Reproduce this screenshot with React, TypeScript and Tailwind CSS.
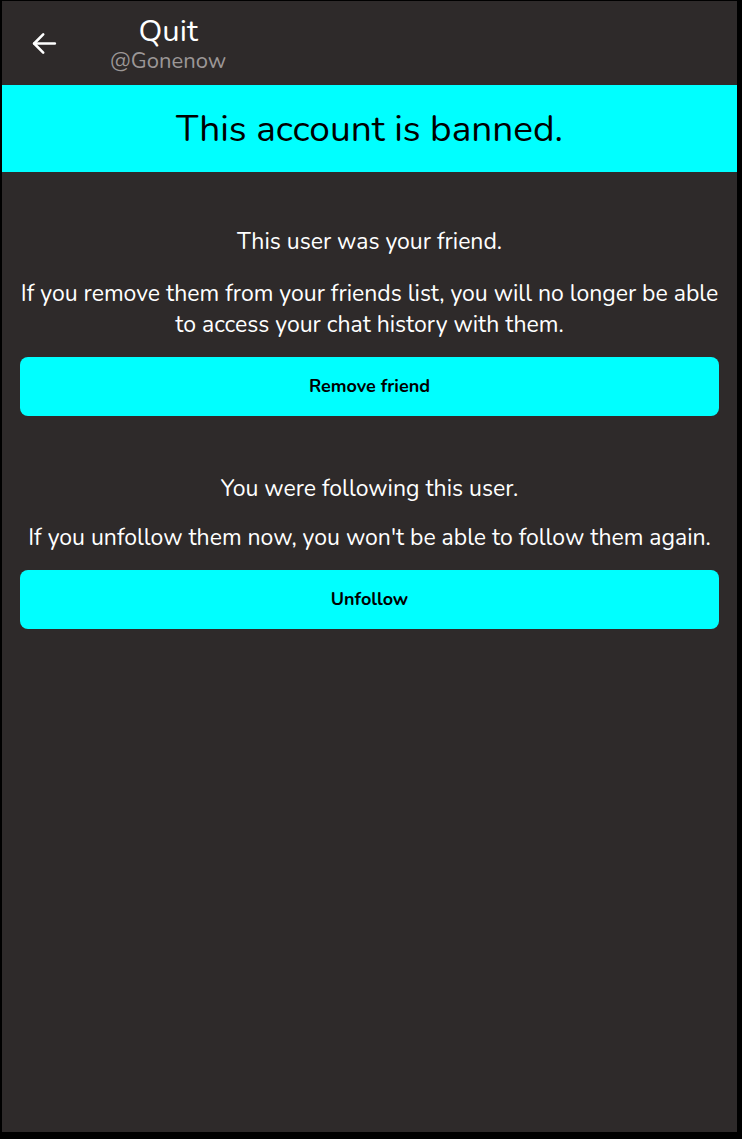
import React from "react";

export default function App() {
  const font = { fontFamily: "'Nunito', 'Open Sans', 'Noto Sans', sans-serif" };
  return (
    <div className="w-[742px] h-[1139px] bg-black" style={font}>
      <div className="ml-[2px] pt-[1px] w-[735px]">
        <div className="w-[735px] h-[1131px] bg-[#2e2a2a] flex flex-col">
          <header className="h-[84px] flex items-start">
            <div className="w-[84px] h-[84px] flex items-center justify-center">
              <svg width="31" height="31" viewBox="0 0 24 24" fill="none" stroke="white" strokeWidth="2" strokeLinecap="round" strokeLinejoin="round">
                <path d="M20 12H4" />
                <path d="M11 5l-7 7 7 7" />
              </svg>
            </div>
            <div className="flex flex-col items-center pt-[14px] ml-[24px]">
              <span className="text-[31px] leading-[32px] text-white">Quit</span>
              <span className="text-[22px] leading-[24px] mt-[2px] text-[#9c9797]">@Gonenow</span>
            </div>
          </header>
          <div className="h-[87px] bg-[#00ffff] flex items-center justify-center">
            <span className="text-[37px] leading-[44px] text-black">This account is banned.</span>
          </div>
          <div className="px-[18px] pt-[56px] flex flex-col">
            <p className="text-center text-white text-[23px] leading-[28px]">This user was your friend.</p>
            <p className="text-center text-white text-[23px] leading-[31px] mt-[22px]">
              If you remove them from your friends list, you will no longer be able to access your chat history with them.
            </p>
            <button className="mt-[17px] h-[59px] rounded-[8px] bg-[#00ffff] text-black text-[18px] font-bold">
              Remove friend
            </button>
            <p className="text-center text-white text-[23px] leading-[28px] mt-[59px]">You were following this user.</p>
            <p className="text-center text-white text-[23px] leading-[31px] mt-[19px]">
              If you unfollow them now, you won't be able to follow them again.
            </p>
            <button className="mt-[17px] h-[59px] rounded-[8px] bg-[#00ffff] text-black text-[18px] font-bold">
              Unfollow
            </button>
          </div>
        </div>
      </div>
    </div>
  );
}
